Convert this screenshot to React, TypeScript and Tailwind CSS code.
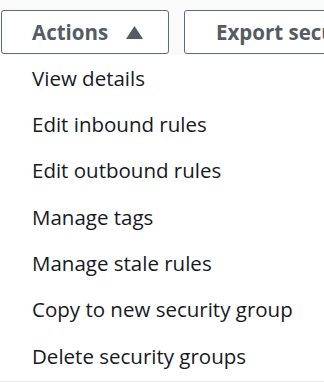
const items = [
  'View details',
  'Edit inbound rules',
  'Edit outbound rules',
  'Manage tags',
  'Manage stale rules',
  'Copy to new security group',
  'Delete security groups',
];

export default function App() {
  return (
    <div className="w-[324px] h-[382px] overflow-hidden bg-white border-b border-[#e9ebed] font-['Open_Sans',sans-serif]">
      <div className="flex gap-[15px] bg-[#fafafa] pt-[10px] pb-px pl-px overflow-hidden">
        <button className="flex items-center justify-between shrink-0 w-[168px] h-[44px] pl-[30px] pr-[25px] border border-[#5f6b7a] rounded-[3px] bg-white text-[#545b64] text-[20.5px] font-bold">
          <span>Actions</span>
          <svg width="17" height="13" viewBox="0 0 17 13">
            <polygon points="8.5,0 17,13 0,13" fill="#545b64" />
          </svg>
        </button>
        <button className="shrink-0 w-[200px] h-[44px] pl-[31px] text-left border border-[#5f6b7a] rounded-[3px] bg-white text-[#545b64] text-[20.5px] font-bold whitespace-nowrap">
          Export security groups to CSV
        </button>
      </div>
      <ul className="flex flex-col">
        {items.map(item => (
          <li key={item} className="h-[46.3px] flex items-center pl-[32px] text-[20.5px] text-[#16191f]">
            {item}
          </li>
        ))}
      </ul>
    </div>
  );
}
